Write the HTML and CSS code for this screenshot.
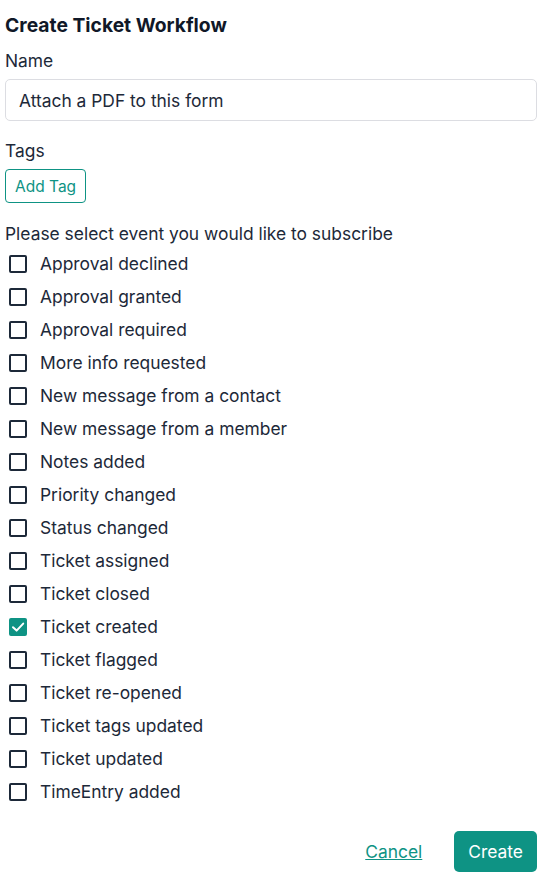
FILE: index.html
```html
<!DOCTYPE html>
<html>
<head>
<meta charset="utf-8">
<link rel="stylesheet" href="styles.css">
</head>
<body>
<div class="page">
  <h1 class="title">Create Ticket Workflow</h1>
  <label class="label">Name</label>
  <div class="input">Attach a PDF to this form</div>
  <label class="label tags-label">Tags</label>
  <div><button class="add-tag">Add Tag</button></div>
  <p class="prompt">Please select event you would like to subscribe</p>
  <ul class="events">
    <li class="event"><span class="box"></span><span>Approval declined</span></li>
    <li class="event"><span class="box"></span><span>Approval granted</span></li>
    <li class="event"><span class="box"></span><span>Approval required</span></li>
    <li class="event"><span class="box"></span><span>More info requested</span></li>
    <li class="event"><span class="box"></span><span>New message from a contact</span></li>
    <li class="event"><span class="box"></span><span>New message from a member</span></li>
    <li class="event"><span class="box"></span><span>Notes added</span></li>
    <li class="event"><span class="box"></span><span>Priority changed</span></li>
    <li class="event"><span class="box"></span><span>Status changed</span></li>
    <li class="event"><span class="box"></span><span>Ticket assigned</span></li>
    <li class="event"><span class="box"></span><span>Ticket closed</span></li>
    <li class="event"><span class="box checked"><svg viewBox="0 0 18 18" width="18" height="18"><path d="M4 9.2 L7.6 12.6 L14.2 5.6" fill="none" stroke="#fff" stroke-width="2" stroke-linecap="round" stroke-linejoin="round"/></svg></span><span>Ticket created</span></li>
    <li class="event"><span class="box"></span><span>Ticket flagged</span></li>
    <li class="event"><span class="box"></span><span>Ticket re-opened</span></li>
    <li class="event"><span class="box"></span><span>Ticket tags updated</span></li>
    <li class="event"><span class="box"></span><span>Ticket updated</span></li>
    <li class="event"><span class="box"></span><span>TimeEntry added</span></li>
  </ul>
  <div class="actions">
    <a class="cancel" href="#">Cancel</a>
    <button class="create">Create</button>
  </div>
</div>
</body>
</html>
```
FILE: styles.css
```css
* { box-sizing: border-box; }
html, body { margin: 0; padding: 0; background: #fff; }
body {
  font-family: Inter, "Noto Sans", sans-serif;
  color: #1d2939;
  font-size: 17.4px;
}
.page {
  padding: 12px 8px 0 5px;
  display: flex;
  flex-direction: column;
}
.title {
  margin: 0;
  font-size: 19.3px;
  font-weight: 700;
  line-height: 26px;
  color: #101828;
}
.label {
  display: block;
  line-height: 24px;
  margin-top: 11px;
}
.input {
  margin-top: 6px;
  height: 42px;
  border: 1px solid #dcdde2;
  border-radius: 5px;
  padding: 0 13px;
  display: flex;
  align-items: center;
}
.tags-label { margin-top: 18px; }
.add-tag {
  margin-top: 6px;
  height: 34px;
  padding: 0 9px;
  border: 1px solid #0e9384;
  border-radius: 4px;
  background: #fff;
  color: #0e9384;
  font-family: inherit;
  font-size: 15.5px;
}
.prompt {
  margin: 19px 0 0;
  line-height: 24px;
}
.events {
  list-style: none;
  margin: 1px 0 0;
  padding: 0;
}
.event {
  display: flex;
  align-items: center;
  height: 33px;
  gap: 13px;
  padding-left: 4px;
}
.box {
  width: 18px;
  height: 18px;
  border: 2px solid #1d2939;
  border-radius: 2px;
  flex: none;
}
.box.checked {
  background: #0e9384;
  border-color: #0e9384;
  position: relative;
}
.box.checked svg { position: absolute; left: -2px; top: -2px; }
.actions {
  margin-top: 23px;
  display: flex;
  justify-content: flex-end;
  align-items: center;
  gap: 32px;
}
.cancel {
  color: #0e9384;
  font-size: 17.4px;
}
.create {
  height: 41px;
  padding: 0 14px;
  border: none;
  border-radius: 5px;
  background: #0e9384;
  color: #fff;
  font-family: inherit;
  font-size: 17.4px;
}
```
